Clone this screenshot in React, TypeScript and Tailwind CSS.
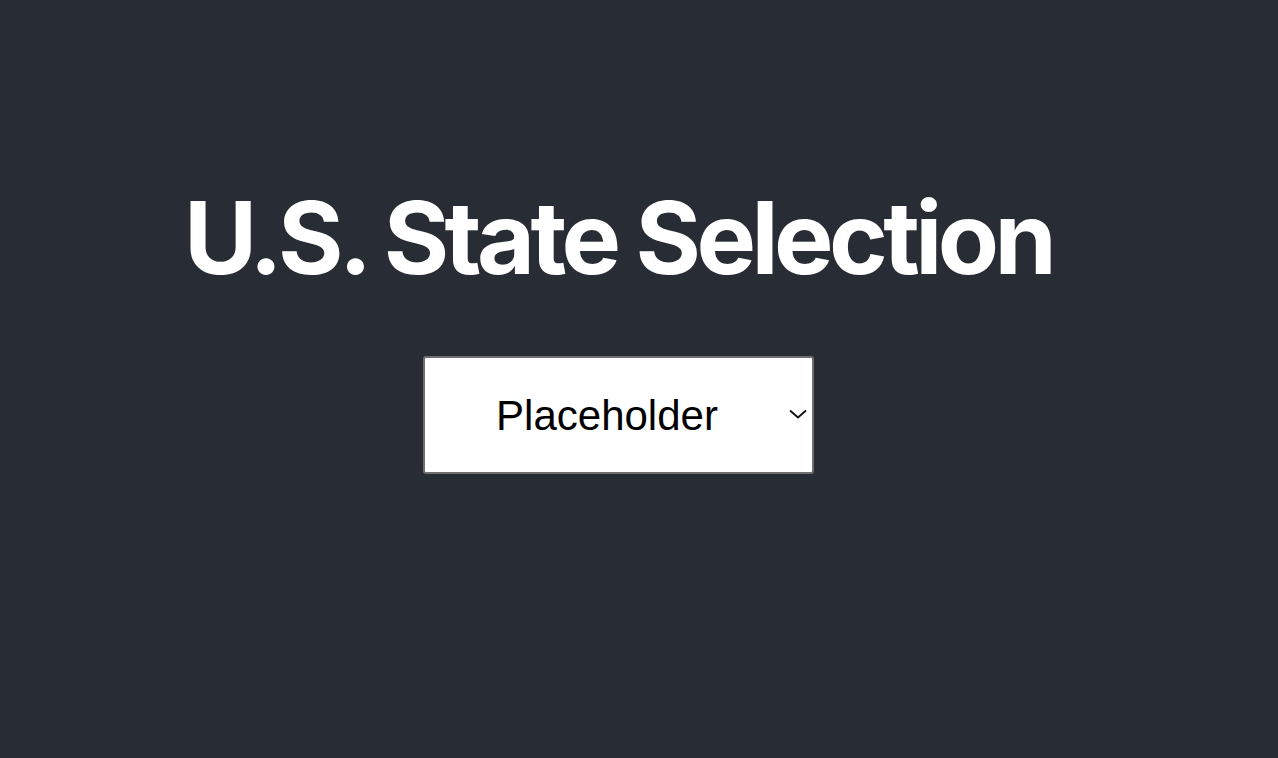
export default function App() {
  return (
    <div className="min-h-[758px] w-full bg-[#282c34]">
      <div className="flex w-[1236px] flex-col items-center pt-[188px]">
        <h1 className="font-['Inter',sans-serif] text-[100px] font-bold leading-[100px] tracking-[-4.6px] text-white">
          U.S. State Selection
        </h1>
        <div className="relative mt-[68px]">
          <select
            defaultValue=""
            className="h-[118px] w-[391px] appearance-none rounded-[3px] border-2 border-[#6f6f6f] bg-white pr-[22px] text-center font-['Liberation_Sans',Arial,sans-serif] text-[42px] text-black"
          >
            <option value="">Placeholder</option>
            <option value="AL">Alabama</option>
            <option value="AK">Alaska</option>
            <option value="AZ">Arizona</option>
          </select>
          <svg
            className="pointer-events-none absolute right-[6px] top-[50px]"
            width="20"
            height="16"
            viewBox="0 0 20 16"
            fill="none"
            stroke="#111"
            strokeWidth="1.8"
          >
            <path d="M2 4.5l8 7 8-7" />
          </svg>
        </div>
      </div>
    </div>
  );
}
